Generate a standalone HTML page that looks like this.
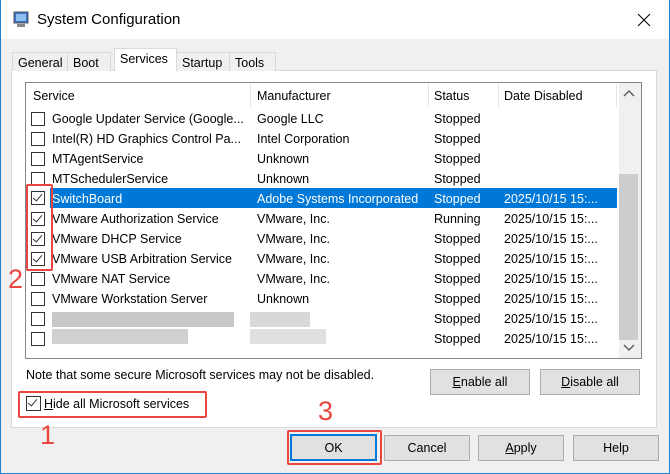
<!DOCTYPE html>
<html><head><style>
*{box-sizing:border-box;margin:0;padding:0}
body{width:670px;height:474px;overflow:hidden;font-family:"Liberation Sans",sans-serif;font-size:12.5px;color:#000;background:#f0f0f0;position:relative}
.a{position:absolute}
.win{left:0;top:0;width:670px;height:474px;border:1px solid #1883d7;border-top:none;background:#f0f0f0}
.title{left:1px;top:0;width:668px;height:39px;background:#fff}
.tab{top:52px;height:19px;border:1px solid #d9d9d9;border-bottom:none;background:#f0f0f0;padding:3px 5px 0;font-size:12.5px}
.panel{left:11px;top:70px;width:646px;height:358px;background:#fff;border:1px solid #d9d9d9}
.list{left:25px;top:82px;width:617px;height:277px;border:1px solid #828790;background:#fff;overflow:hidden}
.row{position:absolute;left:0;height:20px;width:592px;line-height:20px}
.row span{position:absolute;white-space:nowrap}
.cb{position:absolute;left:5px;top:3px;width:14px;height:14px;border:1px solid #333;background:#fff}
.ck::after{content:"";position:absolute;left:3px;top:0px;width:4px;height:8px;border-right:1.5px solid #333;border-bottom:1.5px solid #333;transform:rotate(40deg)}
.btn{height:26px;background:#e1e1e1;border:1px solid #adadad;text-align:center;line-height:24px}
.red{border:2px solid #e8463f;border-radius:2px}
.num{color:#e8463f;font-size:27px}
</style></head><body>
<div class="a win"></div>
<div class="a title"></div>
<svg class="a" style="left:12px;top:10px" width="20" height="20" viewBox="0 0 20 20"><rect x="2" y="2" width="14" height="11" fill="#3b6fc9" stroke="#555"/><rect x="4" y="4" width="10" height="7" fill="#8fc0f0"/><rect x="5" y="14" width="8" height="3" fill="#888"/></svg>
<div class="a" style="left:37px;top:11px;font-size:15px">System Configuration</div>
<svg class="a" style="left:637px;top:13px" width="14" height="14"><path d="M1 1L13 13M13 1L1 13" stroke="#000" stroke-width="1"/></svg>
<div class="a panel"></div>
<div class="a tab" style="left:12px;width:56px">General</div>
<div class="a tab" style="left:67px;width:44px">Boot</div>
<div class="a tab" style="left:114px;top:48px;height:23px;width:63px;background:#fff;padding-top:3px">Services</div>
<div class="a tab" style="left:176px;width:54px">Startup</div>
<div class="a tab" style="left:229px;width:47px">Tools</div>
<div class="a list">
 <div class="a" style="left:0;top:0;width:592px;height:25px;background:#fff"></div>
 <span class="a" style="left:7px;top:6px">Service</span>
 <div class="a" style="left:224px;top:1px;width:1px;height:23px;background:#e5e5e5"></div>
 <span class="a" style="left:231px;top:6px">Manufacturer</span>
 <div class="a" style="left:402px;top:1px;width:1px;height:23px;background:#e5e5e5"></div>
 <span class="a" style="left:408px;top:6px">Status</span>
 <div class="a" style="left:472px;top:1px;width:1px;height:23px;background:#e5e5e5"></div>
 <span class="a" style="left:478px;top:6px">Date Disabled</span>
 <div class="a" style="left:590px;top:1px;width:1px;height:23px;background:#e5e5e5"></div>
 <div class="a" style="left:593px;top:0;width:22px;height:275px;background:#f0f0f0"></div>
 <div class="a" style="left:593px;top:91px;width:19px;height:166px;background:#cdcdcd"></div>
 <svg class="a" style="left:596px;top:6px" width="14" height="10"><path d="M2 7L7 2L12 7" stroke="#606060" stroke-width="1.5" fill="none"/></svg>
 <svg class="a" style="left:596px;top:260px" width="14" height="10"><path d="M2 2L7 7L12 2" stroke="#606060" stroke-width="1.5" fill="none"/></svg>

 <div class="row" style="top:26px"><div class="cb"></div><span style="left:26px">Google Updater Service (Google...</span><span style="left:231px">Google LLC</span><span style="left:408px">Stopped</span></div>
 <div class="row" style="top:46px"><div class="cb"></div><span style="left:26px">Intel(R) HD Graphics Control Pa...</span><span style="left:231px">Intel Corporation</span><span style="left:408px">Stopped</span></div>
 <div class="row" style="top:66px"><div class="cb"></div><span style="left:26px">MTAgentService</span><span style="left:231px">Unknown</span><span style="left:408px">Stopped</span></div>
 <div class="row" style="top:86px"><div class="cb"></div><span style="left:26px">MTSchedulerService</span><span style="left:231px">Unknown</span><span style="left:408px">Stopped</span></div>
 <div class="row" style="top:105px;color:#fff"><div class="a" style="left:24px;top:0;width:567px;height:20px;background:#0078d7"></div><div class="cb ck"></div><span style="left:26px;top:1px">SwitchBoard</span><span style="left:231px;top:1px">Adobe Systems Incorporated</span><span style="left:408px;top:1px">Stopped</span><span style="left:478px;top:1px">2025/10/15 15:...</span></div>
 <div class="row" style="top:126px"><div class="cb ck"></div><span style="left:26px">VMware Authorization Service</span><span style="left:231px">VMware, Inc.</span><span style="left:408px">Running</span><span style="left:478px">2025/10/15 15:...</span></div>
 <div class="row" style="top:146px"><div class="cb ck"></div><span style="left:26px">VMware DHCP Service</span><span style="left:231px">VMware, Inc.</span><span style="left:408px">Stopped</span><span style="left:478px">2025/10/15 15:...</span></div>
 <div class="row" style="top:166px"><div class="cb ck"></div><span style="left:26px">VMware USB Arbitration Service</span><span style="left:231px">VMware, Inc.</span><span style="left:408px">Stopped</span><span style="left:478px">2025/10/15 15:...</span></div>
 <div class="row" style="top:186px"><div class="cb"></div><span style="left:26px">VMware NAT Service</span><span style="left:231px">VMware, Inc.</span><span style="left:408px">Stopped</span><span style="left:478px">2025/10/15 15:...</span></div>
 <div class="row" style="top:206px"><div class="cb"></div><span style="left:26px">VMware Workstation Server</span><span style="left:231px">Unknown</span><span style="left:408px">Stopped</span><span style="left:478px">2025/10/15 15:...</span></div>
 <div class="row" style="top:226px"><div class="cb"></div><div class="a" style="left:26px;top:3px;width:182px;height:15px;background:#c8c8c8"></div><div class="a" style="left:224px;top:3px;width:60px;height:15px;background:#d8d8d8"></div><span style="left:408px">Stopped</span><span style="left:478px">2025/10/15 15:...</span></div>
 <div class="row" style="top:246px"><div class="cb"></div><div class="a" style="left:26px;top:0;width:136px;height:15px;background:#d0d0d0"></div><div class="a" style="left:224px;top:0;width:76px;height:15px;background:#e0e0e0"></div><span style="left:408px">Stopped</span><span style="left:478px">2025/10/15 15:...</span></div>
</div>
<div class="a red" style="left:26px;top:184px;width:27px;height:87px"></div>
<div class="a num" style="left:8px;top:264px">2</div>
<div class="a" style="left:26px;top:368px">Note that some secure Microsoft services may not be disabled.</div>
<div class="a btn" style="left:430px;top:369px;width:100px"><u>E</u>nable all</div>
<div class="a btn" style="left:540px;top:369px;width:100px"><u>D</u>isable all</div>
<div class="a red" style="left:18px;top:391px;width:189px;height:27px"></div>
<div class="a cb ck" style="left:26px;top:396px;width:15px;height:15px"></div>
<div class="a" style="left:44px;top:397px"><u>H</u>ide all Microsoft services</div>
<div class="a num" style="left:40px;top:420px">1</div>
<div class="a num" style="left:318px;top:396px">3</div>
<div class="a red" style="left:287px;top:430px;width:95px;height:35px"></div>
<div class="a btn" style="left:290px;top:434px;width:87px;height:27px;border:2px solid #0078d7">OK</div>
<div class="a btn" style="left:384px;top:435px;width:86px">Cancel</div>
<div class="a btn" style="left:478px;top:435px;width:86px"><u>A</u>pply</div>
<div class="a btn" style="left:573px;top:435px;width:86px">Help</div>
</body></html>
